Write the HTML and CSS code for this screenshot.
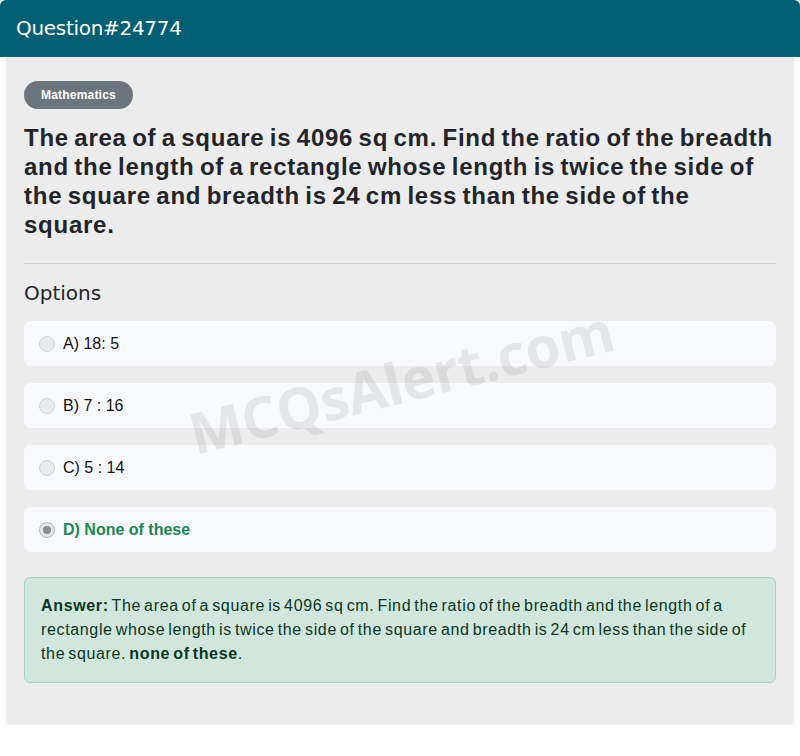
FILE: index.html
```html
<!DOCTYPE html>
<html lang="en">
<head>
<meta charset="utf-8">
<title>Question#24774</title>
<link rel="stylesheet" href="styles.css">
</head>
<body>
<div class="page">
  <header class="q-header">Question#24774</header>
  <main class="q-card">
    <span class="badge">Mathematics</span>
    <h1 class="q-title">The area of a square is 4096 sq cm. Find the ratio of the breadth and the length of a rectangle whose length is twice the side of the square and breadth is 24 cm less than the side of the square.</h1>
    <hr class="divider">
    <h2 class="options-title">Options</h2>
    <ul class="options">
      <li class="option"><span class="radio"></span><span class="opt-text">A) 18: 5</span></li>
      <li class="option"><span class="radio"></span><span class="opt-text">B) 7 : 16</span></li>
      <li class="option"><span class="radio"></span><span class="opt-text">C) 5 : 14</span></li>
      <li class="option correct"><span class="radio checked"></span><span class="opt-text">D) None of these</span></li>
    </ul>
    <div class="answer"><strong>Answer:</strong> The area of a square is 4096 sq cm. Find the ratio of the breadth and the length of a rectangle whose length is twice the side of the square and breadth is 24 cm less than the side of the square. <strong>none of these</strong>.</div>
    <div class="watermark">MCQsAlert.com</div>
  </main>
</div>
</body>
</html>
```
FILE: styles.css
```css
* { box-sizing: border-box; }
html, body { margin: 0; padding: 0; background: #ffffff; }
body { font-family: "Liberation Sans", Arial, sans-serif; color: #212529; }

.page { width: 800px; }

.q-header {
  height: 57px;
  background: #005f73;
  color: #ffffff;
  font-family: "DejaVu Sans", sans-serif;
  font-size: 20px;
  line-height: 57px;
  padding-left: 16px;
  border-radius: 6px 6px 0 0;
  letter-spacing: -0.3px;
}

.q-card {
  position: relative;
  overflow: hidden;
  margin: 0 6px;
  background: #ececec;
  padding: 24px 18px 42px;
  border-radius: 0 0 6px 6px;
  box-shadow: 0 2px 4px rgba(0, 0, 0, 0.06);
}

.badge {
  display: inline-block;
  height: 28px;
  line-height: 28px;
  padding: 0 17px;
  border-radius: 14px;
  background: #6c757d;
  color: #ffffff;
  font-size: 12px;
  font-weight: bold;
  letter-spacing: 0.2px;
}

.q-title {
  margin: 14px 0 0;
  font-size: 24px;
  line-height: 29px;
  font-weight: bold;
  letter-spacing: 0.75px;
  word-spacing: -2px;
  color: #212529;
}

.divider {
  margin: 24px 0 0;
  border: 0;
  border-top: 1px solid #cfcfcf;
}

.options-title {
  margin: 17px 0 0;
  font-family: "DejaVu Sans", sans-serif;
  font-size: 20px;
  line-height: 24px;
  font-weight: normal;
  color: #212529;
}

.options {
  list-style: none;
  margin: 16px 0 0;
  padding: 0;
  display: flex;
  flex-direction: column;
  gap: 17px;
}

.option {
  display: flex;
  align-items: center;
  height: 45px;
  padding: 0 15px;
  background: #f8f9fc;
  border-radius: 6px;
  font-size: 16px;
  color: #111111;
}

.radio {
  position: relative;
  width: 16px;
  height: 16px;
  margin-right: 8px;
  border-radius: 50%;
  border: 1px solid #d0d3d6;
  background: #e9ecef;
  flex: none;
}

.radio.checked {
  border-color: #b5b8bb;
  background: #e3e5e8;
}

.radio.checked::after {
  content: "";
  position: absolute;
  left: 3px;
  top: 3px;
  width: 8px;
  height: 8px;
  border-radius: 50%;
  background: #8a8d90;
}

.option.correct .opt-text {
  color: #198754;
  font-weight: bold;
}

.answer {
  margin-top: 25px;
  padding: 16px;
  background: #d1e7dd;
  border: 1px solid #a3cfbb;
  border-radius: 6px;
  color: #0a3622;
  font-size: 16px;
  line-height: 24px;
  letter-spacing: 0.65px;
  word-spacing: -2px;
}

.answer strong { font-weight: bold; }

.watermark {
  position: absolute;
  left: 165px;
  top: 292px;
  width: 460px;
  text-align: center;
  font-family: "Open Sans", sans-serif;
  font-weight: 700;
  font-size: 57px;
  line-height: 64px;
  letter-spacing: -0.5px;
  color: rgba(0, 0, 0, 0.075);
  transform: rotate(-14deg);
  pointer-events: none;
  white-space: nowrap;
}
```
